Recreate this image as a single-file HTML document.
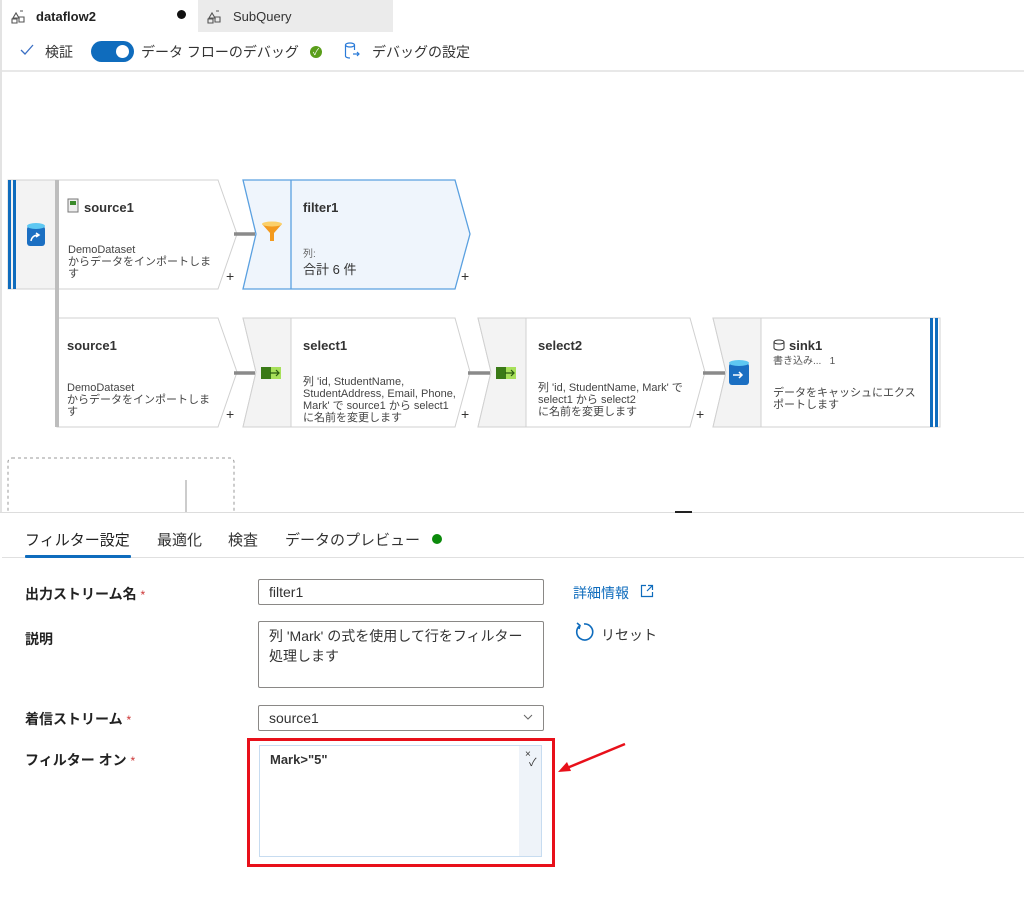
<!DOCTYPE html>
<html><head><meta charset="utf-8"><style>
*{margin:0;padding:0;box-sizing:border-box}
body{width:1024px;height:907px;background:#fff;position:relative;overflow:hidden;font-family:"Liberation Sans","Noto Sans CJK JP",sans-serif;color:#323130}
.a{position:absolute;white-space:nowrap}
.t{font-size:13px;font-weight:bold;color:#333}
.d{font-size:11px;line-height:12px;color:#444;white-space:normal}
.lbl{font-size:14px;font-weight:bold;color:#222}
.req{color:#c33;font-size:12px;font-weight:normal}
.inp{position:absolute;border:1px solid #8a8886;border-radius:2px;background:#fff;font-size:14px;padding:4px 10px;color:#333}
</style></head><body>
<!-- tabs -->
<div class="a" style="left:198px;top:0;width:195px;height:32px;background:#ebebeb"></div>
<div class="a" style="left:0;top:0;width:2px;height:907px;background:#e3e3e3"></div>
<svg class="a" style="left:10px;top:8px" width="18" height="16" viewBox="0 0 18 16" fill="none" stroke="#555" stroke-width="1.1"><path d="M3 10l3-5 3 5zM10 3l3 0M9 9h5v5H9zM2 11h5v4H2z"/></svg>
<div class="a" style="left:36px;top:9px;font-size:13px;font-weight:bold;color:#222">dataflow2</div>
<div class="a" style="left:177px;top:10px;width:9px;height:9px;border-radius:50%;background:#111"></div>
<svg class="a" style="left:206px;top:8px" width="18" height="16" viewBox="0 0 18 16" fill="none" stroke="#555" stroke-width="1.1"><path d="M3 10l3-5 3 5zM10 3l3 0M9 9h5v5H9zM2 11h5v4H2z"/></svg>
<div class="a" style="left:233px;top:9px;font-size:13px;color:#333">SubQuery</div>
<!-- toolbar -->
<svg class="a" style="left:20px;top:44px" width="14" height="12"><path d="M1 6l4 4 8-9" fill="none" stroke="#3a6fc4" stroke-width="1.3"/></svg>
<div class="a" style="left:45px;top:42px;font-size:14px;color:#333">検証</div>
<div class="a" style="left:91px;top:41px;width:43px;height:21px;border-radius:11px;background:#0f6cbd"></div>
<div class="a" style="left:116px;top:45px;width:13px;height:13px;border-radius:50%;background:#fff"></div>
<div class="a" style="left:141px;top:42px;font-size:14px;color:#333">データ フローのデバッグ</div>
<div class="a" style="left:310px;top:46px;width:12px;height:12px;border-radius:50%;background:#5a9e1a;color:#fff;font-size:9px;line-height:12px;text-align:center">✓</div>
<svg class="a" style="left:344px;top:42px" width="16" height="18" viewBox="0 0 16 18" fill="none" stroke="#2b7bd8" stroke-width="1.2"><ellipse cx="6" cy="3" rx="4.5" ry="2"/><path d="M1.5 3v11c0 1.2 2 2 4.5 2M10.5 3v5M9 12h6M13 10l2 2-2 2"/></svg>
<div class="a" style="left:372px;top:42px;font-size:14px;color:#333">デバッグの設定</div>
<div class="a" style="left:2px;top:70px;width:1022px;height:2px;background:#e8e8e8"></div>
<!-- canvas shapes -->
<svg class="a" style="left:0;top:0" width="1024" height="520">
<g stroke="#d0d0d0" stroke-width="1" fill="#fff">
<rect x="8" y="180" width="48" height="109" fill="#f3f3f3"/>
<polygon points="57,180 218,180 237,234 218,289 57,289"/>
<polygon points="57,318 218,318 237,372 218,427 57,427"/>
<polygon points="243,318 455,318 470,372 455,427 243,427 256,372"/>
<polygon points="478,318 690,318 705,372 690,427 478,427 491,372"/>
<polygon points="713,318 940,318 940,427 713,427 726,372"/>
<polygon points="243,318 291,318 291,427 243,427 256,372" fill="#f3f3f3"/>
<polygon points="478,318 526,318 526,427 478,427 491,372" fill="#f3f3f3"/>
<polygon points="713,318 761,318 761,427 713,427 726,372" fill="#f3f3f3"/>
</g>
<polygon points="243,180 455,180 470,234 455,289 243,289 256,234" fill="#eff5fc" stroke="#5aa0e0" stroke-width="1.3"/>
<line x1="291" y1="180" x2="291" y2="289" stroke="#5aa0e0" stroke-width="1.3"/>
<rect x="8" y="180" width="3" height="109" fill="#0f6cbd"/><rect x="13" y="180" width="3" height="109" fill="#0f6cbd"/>
<rect x="930" y="318" width="3" height="109" fill="#0f6cbd"/><rect x="935" y="318" width="3" height="109" fill="#0f6cbd"/>
<rect x="55" y="180" width="4" height="247" fill="#bdbdbd"/>
<g stroke="#8a8a8a" stroke-width="3.5"><line x1="234" y1="234" x2="255" y2="234"/><line x1="234" y1="373" x2="255" y2="373"/><line x1="468" y1="373" x2="490" y2="373"/><line x1="703" y1="373" x2="725" y2="373"/></g>
<!-- icons -->
<rect x="27" y="226" width="18" height="20" rx="3" fill="#1b6fc2"/><ellipse cx="36" cy="226" rx="9" ry="3" fill="#5ec8f2"/><path d="M31 241q1-6 8-6M36 233l3 2-3 2" stroke="#fff" stroke-width="1.5" fill="none"/>
<path d="M262 224h20l-8 9v8h-4v-8z" fill="#f39a1e"/><ellipse cx="272" cy="224" rx="10" ry="2.5" fill="#fbd06a"/>
<rect x="261" y="367" width="10" height="12" fill="#3a7a17"/><rect x="271" y="367" width="10" height="12" fill="#a7e05a"/><path d="M270 373h8M276 370l3 3-3 3" stroke="#2a5a10" stroke-width="1.2" fill="none"/>
<rect x="496" y="367" width="10" height="12" fill="#3a7a17"/><rect x="506" y="367" width="10" height="12" fill="#a7e05a"/><path d="M505 373h8M511 370l3 3-3 3" stroke="#2a5a10" stroke-width="1.2" fill="none"/>
<rect x="729" y="363" width="20" height="22" rx="3" fill="#1b6fc2"/><ellipse cx="739" cy="363" rx="10" ry="3" fill="#5ec8f2"/><path d="M733 375h9M739 372l3 3-3 3" stroke="#fff" stroke-width="1.5" fill="none"/>
<rect x="68" y="199" width="10" height="13" fill="#eee" stroke="#777"/><rect x="70" y="201" width="6" height="4" fill="#3a8a2a"/>
<ellipse cx="779" cy="342" rx="5" ry="2" fill="none" stroke="#333"/><path d="M774 342v6c0 1 2 2 5 2s5-1 5-2v-6" fill="none" stroke="#333"/>
<rect x="8" y="458" width="226" height="60" rx="4" fill="none" stroke="#999" stroke-dasharray="3,3"/>
<line x1="186" y1="480" x2="186" y2="520" stroke="#999"/>
</svg>
<div class="a" style="left:0;top:512px;width:1024px;height:400px;background:#fff;border-top:1px solid #ddd"></div>
<div class="a" style="left:675px;top:511px;width:17px;height:2px;background:#222"></div>
<!-- node texts -->
<div class="a t" style="left:84px;top:200px">source1</div>
<div class="a d" style="left:68px;top:244px;width:150px">DemoDataset<br>からデータをインポートしま<br>す</div>
<div class="a" style="left:226px;top:268px;font-size:14px">+</div>
<div class="a t" style="left:303px;top:200px">filter1</div>
<div class="a" style="left:303px;top:245px;font-size:10px;color:#666">列:</div>
<div class="a" style="left:303px;top:259px;font-size:13px;color:#333">合計 6 件</div>
<div class="a" style="left:461px;top:268px;font-size:14px">+</div>
<div class="a t" style="left:67px;top:338px">source1</div>
<div class="a d" style="left:67px;top:382px;width:150px">DemoDataset<br>からデータをインポートしま<br>す</div>
<div class="a" style="left:226px;top:406px;font-size:14px">+</div>
<div class="a t" style="left:303px;top:338px">select1</div>
<div class="a d" style="left:303px;top:376px;width:160px">列 'id, StudentName,<br>StudentAddress, Email, Phone,<br>Mark' で source1 から select1<br>に名前を変更します</div>
<div class="a" style="left:461px;top:406px;font-size:14px">+</div>
<div class="a t" style="left:538px;top:338px">select2</div>
<div class="a d" style="left:538px;top:382px;width:160px">列 'id, StudentName, Mark' で<br>select1 から select2<br>に名前を変更します</div>
<div class="a" style="left:696px;top:406px;font-size:14px">+</div>
<div class="a t" style="left:789px;top:338px">sink1</div>
<div class="a" style="left:773px;top:352px;font-size:10px;color:#555">書き込み...&nbsp;&nbsp;&nbsp;1</div>
<div class="a d" style="left:773px;top:387px;width:160px">データをキャッシュにエクス<br>ポートします</div>
<!-- bottom tabs -->
<div class="a" style="left:25px;top:529px;font-size:15px;color:#222">フィルター設定</div>
<div class="a" style="left:157px;top:529px;font-size:15px;color:#333">最適化</div>
<div class="a" style="left:228px;top:529px;font-size:15px;color:#333">検査</div>
<div class="a" style="left:285px;top:529px;font-size:15px;color:#333">データのプレビュー</div>
<div class="a" style="left:432px;top:534px;width:10px;height:10px;border-radius:50%;background:#0b8a0b"></div>
<div class="a" style="left:2px;top:557px;width:1022px;height:1px;background:#e0e0e0"></div>
<div class="a" style="left:25px;top:555px;width:106px;height:3px;background:#0f6cbd;border-radius:1px"></div>
<!-- form -->
<div class="a lbl" style="left:25px;top:584px">出力ストリーム名 <span class="req">*</span></div>
<div class="inp" style="left:258px;top:579px;width:286px;height:26px">filter1</div>
<div class="a" style="left:573px;top:583px;font-size:14px;color:#0f6cbd">詳細情報</div>
<svg class="a" style="left:640px;top:584px" width="14" height="14" fill="none" stroke="#0f6cbd" stroke-width="1.2"><path d="M6 1.5H1.5v11h11V8M8 1.5h4.5V6M12.5 1.5L7 7"/></svg>
<svg class="a" style="left:574px;top:622px" width="20" height="20" fill="none" stroke="#0f6cbd" stroke-width="1.6"><path d="M6 3.5A8 8 0 1 0 10 2"/><path d="M3 1l3 2.5-1 3.5"/></svg>
<div class="a" style="left:601px;top:625px;font-size:14px;color:#333">リセット</div>
<div class="a lbl" style="left:25px;top:629px">説明</div>
<div class="inp" style="left:258px;top:621px;width:286px;height:67px;white-space:normal;line-height:20px">列 'Mark' の式を使用して行をフィルター処理します</div>
<div class="a lbl" style="left:25px;top:709px">着信ストリーム <span class="req">*</span></div>
<div class="inp" style="left:258px;top:705px;width:286px;height:26px">source1</div>
<svg class="a" style="left:523px;top:714px" width="10" height="6"><path d="M1 1l4 4 4-4" fill="none" stroke="#666"/></svg>
<div class="a lbl" style="left:25px;top:750px">フィルター オン <span class="req">*</span></div>
<div class="a" style="left:259px;top:745px;width:283px;height:112px;border:1px solid #c7dcf0;background:#fff"></div>
<div class="a" style="left:519px;top:746px;width:22px;height:110px;background:#eef3f9"></div>
<div class="a" style="left:270px;top:752px;font-size:13px;font-weight:bold;color:#333">Mark&gt;"5"</div>
<div class="a" style="left:525px;top:749px;font-size:10px;color:#333">×</div>
<div class="a" style="left:529px;top:754px;font-size:11px;color:#333">✓</div>
<div class="a" style="left:247px;top:738px;width:308px;height:129px;border:3px solid #e8101a"></div>
<svg class="a" style="left:555px;top:740px" width="75" height="35"><line x1="70" y1="4" x2="12" y2="28" stroke="#e8101a" stroke-width="2.5"/><polygon points="3,32 12,22 16,31" fill="#e8101a"/></svg>
</body></html>
